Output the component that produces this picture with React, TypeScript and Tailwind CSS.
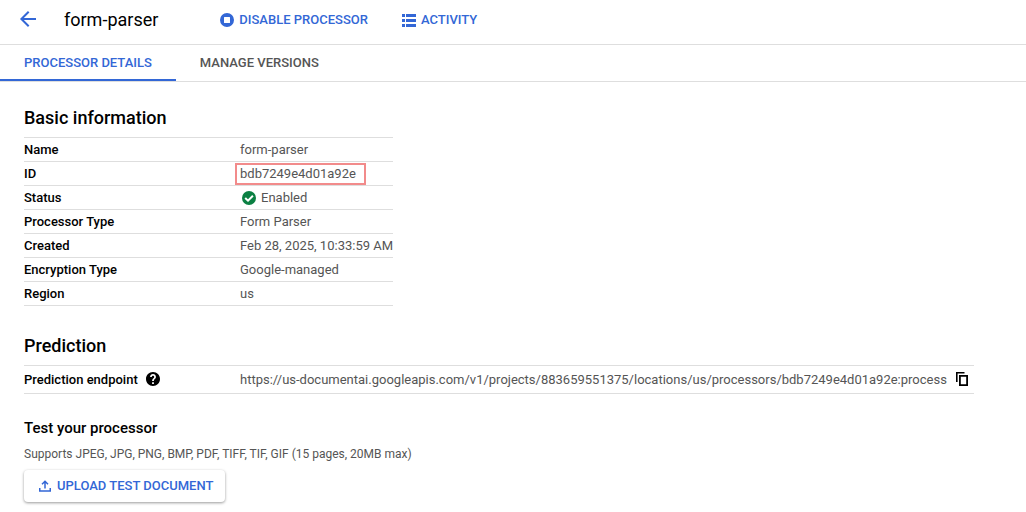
import type { ReactNode } from "react";

const details: { label: string; value: ReactNode }[] = [
  { label: "Name", value: "form-parser" },
  {
    label: "ID",
    value: (
      <span className="-ml-1 block w-fit pr-[9px] pl-1 leading-5 outline-2 -outline-offset-1 outline-[#f28b8b]">
        bdb7249e4d01a92e
      </span>
    ),
  },
  {
    label: "Status",
    value: (
      <span className="flex items-center gap-1 pl-px">
        <CheckIcon />
        Enabled
      </span>
    ),
  },
  { label: "Processor Type", value: "Form Parser" },
  { label: "Created", value: "Feb 28, 2025, 10:33:59 AM" },
  { label: "Encryption Type", value: "Google-managed" },
  { label: "Region", value: "us" },
];

function CheckIcon() {
  return (
    <svg className="size-4" viewBox="0 0 16 16" aria-hidden="true">
      <circle cx="8" cy="8" r="7" fill="#0b8043" />
      <path d="M4.2 8 7 10.700l4.900-4.900" fill="none" stroke="#fff" strokeWidth="2" />
    </svg>
  );
}

function BackIcon() {
  return (
    <svg className="size-4 overflow-visible" viewBox="0 0 16 16" fill="none" stroke="#3367d6" strokeWidth="2" aria-hidden="true">
      <path d="M16 7H2M8.700-.3 1.400 7l7.300 7.300" />
    </svg>
  );
}

function StopIcon() {
  return (
    <svg className="size-[14px]" viewBox="0 0 14 14" fill="#3367d6" aria-hidden="true">
      <path fillRule="evenodd" d="M7 0a7 7 0 1 1 0 14A7 7 0 0 1 7 0ZM4.500 4h5a.5.5 0 0 1 .5.5v5a.5.5 0 0 1-.5.5h-5a.5.5 0 0 1-.5-.5v-5a.5.5 0 0 1 .5-.5Z" />
    </svg>
  );
}

function ListIcon() {
  return (
    <svg className="h-[13px] w-[14px]" viewBox="0 0 14 13" fill="#3367d6" shapeRendering="crispEdges" aria-hidden="true">
      <path d="M0 0h3v3H0zM4 0h10v3H4zM0 5h3v3H0zM4 5h10v3H4zM0 10h3v3H0zM4 10h10v3H4z" />
    </svg>
  );
}

function HelpIcon() {
  return (
    <svg className="size-[14px]" viewBox="2 2 20 20" aria-hidden="true">
      <path d="M12 2C6.480 2 2 6.480 2 12s4.480 10 10 10 10-4.480 10-10S17.520 2 12 2zm1.300 17h-2.600v-2.400h2.600V19zm2.100-7.750-.9.920C13.700 12.900 13.300 13.500 13.300 15h-2.600v-.5c0-1.100.45-2.100 1.170-2.830l1.240-1.260c.37-.36.590-.86.590-1.410 0-1.100-.75-1.800-1.700-1.800s-1.700.7-1.700 1.800H7.800c0-2.300 1.900-4 4.200-4s4.200 1.700 4.200 4c0 .88-.3 1.680-.8 2.250z" />
    </svg>
  );
}

function CopyIcon() {
  return (
    <svg className="size-[14px]" viewBox="0 0 14 14" fill="none" stroke="#000" aria-hidden="true">
      <path d="M8.500.8H.8V10" strokeWidth="1.600" />
      <path d="M3.900 3.900h7.200v9.200H3.900z" strokeWidth="1.800" />
    </svg>
  );
}

function UploadIcon() {
  return (
    <svg className="size-3" viewBox="0 0 12 12" fill="none" stroke="#3367d6" strokeWidth="1.500" aria-hidden="true">
      <path d="M6 8.500V1.500M3 4.200l3-3 3 3M.75 8v3h10.500V8" />
    </svg>
  );
}

export default function App() {
  return (
    <div className="min-h-screen bg-white font-[Roboto,sans-serif] text-[13px] leading-5 text-[#555]">
      <header className="flex h-[45px] items-center border-b border-[#dedede] pb-1 pl-5">
        <button type="button" aria-label="Back" className="mr-7">
          <BackIcon />
        </button>
        <h1 className="text-lg leading-6 text-black">form-parser</h1>
        <div className="ml-[62px] flex items-center gap-[34px] font-medium text-[#3367d6]">
          <button type="button" className="flex items-center gap-[5px]">
            <StopIcon />
            DISABLE PROCESSOR
          </button>
          <button type="button" className="flex items-center gap-[5px]">
            <ListIcon />
            ACTIVITY
          </button>
        </div>
      </header>
      <nav className="flex h-[37px] border-b border-[#dedede] font-medium">
        <a href="#details" aria-current="page" className="flex items-center border-b-2 border-[#3367d6] px-6 pt-0.5 text-[#3367d6]">
          PROCESSOR DETAILS
        </a>
        <a href="#versions" className="flex items-center border-b-2 border-transparent px-6 pt-0.5">
          MANAGE VERSIONS
        </a>
      </nav>
      <main className="px-6 pt-6">
        <section>
          <h2 className="pb-[7px] text-lg leading-6 font-medium text-black">Basic information</h2>
          <table className="border-collapse">
            <tbody>
              {details.map((row) => (
                <tr key={row.label} className="h-6 border-y border-[#dedede]">
                  <th scope="row" className="w-[216px] p-0 text-left font-medium text-black">
                    {row.label}
                  </th>
                  <td className="p-0 whitespace-nowrap">{row.value}</td>
                </tr>
              ))}
            </tbody>
          </table>
        </section>
        <section className="pt-7">
          <h2 className="pb-[7px] text-lg leading-6 font-medium text-black">Prediction</h2>
          <table className="border-collapse">
            <tbody>
              <tr className="h-7 border-y border-[#dedede]">
                <th scope="row" className="w-[216px] p-0 text-left font-medium text-black">
                  <span className="flex items-center gap-2">
                    Prediction endpoint
                    <button type="button" aria-label="Help" className="pb-0.5">
                      <HelpIcon />
                    </button>
                  </span>
                </th>
                <td className="p-0 pr-1">
                  <span className="flex items-center gap-[9px] whitespace-nowrap">
                    https://us-documentai.googleapis.com/v1/projects/883659551375/locations/us/processors/bdb7249e4d01a92e:process
                    <button type="button" aria-label="Copy endpoint" className="pb-0.5">
                      <CopyIcon />
                    </button>
                  </span>
                </td>
              </tr>
            </tbody>
          </table>
        </section>
        <section className="pt-6">
          <h3 className="text-[15px] leading-5 font-medium text-black">Test your processor</h3>
          <p className="pt-2 text-xs leading-4">Supports JPEG, JPG, PNG, BMP, PDF, TIFF, TIF, GIF (15 pages, 20MB max)</p>
          <button
            type="button"
            className="mt-2 flex h-8 items-center gap-1.5 rounded-sm bg-white px-3 pl-[15px] font-medium text-[#3367d6] shadow-[0_1px_3px_rgba(0,0,0,0.4)]"
          >
            <UploadIcon />
            UPLOAD TEST DOCUMENT
          </button>
        </section>
      </main>
    </div>
  );
}
